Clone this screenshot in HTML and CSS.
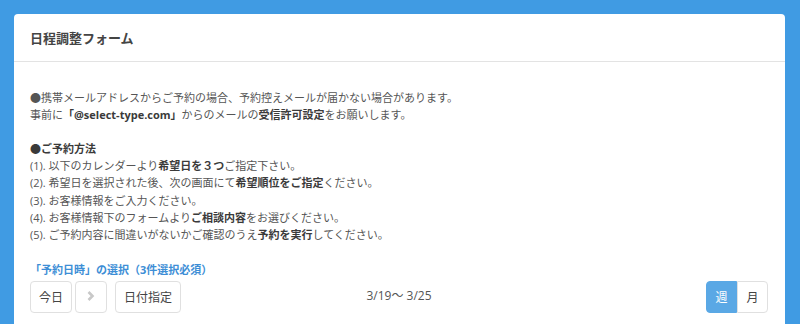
FILE: index.html
```html
<!DOCTYPE html>
<html lang="ja">
<head>
    <meta charset="UTF-8">
    <title>日程調整フォーム</title>
    <link rel="stylesheet" href="styles.css">
</head>
<body>

<div class="panel">
    <div class="panel-head">日程調整フォーム</div>
    <div class="panel-body">
        <p class="notes">
            ●携帯メールアドレスからご予約の場合、予約控えメールが届かない場合があります。<br>
            事前に<b>「@select-type.com」</b>からのメールの<b>受信許可設定</b>をお願いします。<br>
            <br>
            <b>●ご予約方法</b><br>
            (1). 以下のカレンダーより<b>希望日を３つ</b>ご指定下さい。<br>
            (2). 希望日を選択された後、次の画面にて<b>希望順位をご指定</b>ください。<br>
            (3). お客様情報をご入力ください。<br>
            (4). お客様情報下のフォームより<b>ご相談内容</b>をお選びください。<br>
            (5). ご予約内容に間違いがないかご確認のうえ<b>予約を実行</b>してください。
        </p>

        <div class="select-title">「予約日時」の選択（3件選択必須）</div>

        <!-- calendar toolbar -->
        <div class="toolbar">
            <div class="tb-left">
                <button class="btn">今日</button>
                <button class="btn btn-arrow" disabled>
                    <svg width="8" height="10" viewBox="0 0 8 10"><path d="M1.5 1 L5.5 5 L1.5 9" fill="none" stroke="#c8c8c8" stroke-width="2.6"/></svg>
                </button>
                <button class="btn">日付指定</button>
            </div>
            <div class="tb-range">3/19～ 3/25</div>
            <div class="tb-right">
                <button class="btn btn-seg active">週</button><button class="btn btn-seg">月</button>
            </div>
        </div>
    </div>
</div>

</body>
</html>
```

FILE: styles.css
```css
body {
    margin: 0;
    background-color: #409be3;
    font-family: "Open Sans", "Noto Sans CJK JP", sans-serif;
    color: #555;
    height: 324px;
    overflow: hidden;
}

.panel {
    margin: 14px 15px 0 14px;
    background-color: #fff;
    border-radius: 4px 4px 0 0;
    height: 310px;
}

.panel-head {
    height: 47px;
    padding-left: 16px;
    display: flex;
    align-items: center;
    font-size: 13px;
    font-weight: bold;
    color: #444;
    border-bottom: 1px solid #e3e3e3;
}

.panel-body {
    padding: 27px 17px 0 16px;
}

.notes {
    margin: 0;
    font-size: 11px;
    line-height: 17.1px;
}

.notes b {
    color: #3a3a3a;
}

.select-title {
    margin-top: 18px;
    font-size: 11px;
    line-height: 17px;
    font-weight: bold;
    color: #3d8ed6;
}

.toolbar {
    margin-top: 3px;
    display: flex;
    align-items: center;
}

.tb-left, .tb-right {
    flex: 1;
    display: flex;
}

.tb-right {
    justify-content: flex-end;
}

.tb-range {
    font-size: 12px;
    color: #555;
    padding-bottom: 4px;
}

.btn {
    height: 32px;
    padding: 0 8px;
    margin-right: 3px;
    border: 1px solid #e0e0e0;
    border-radius: 4px;
    background-color: #fff;
    font-family: inherit;
    font-size: 12px;
    color: #444;
}

.btn-arrow {
    width: 32px;
    padding: 0;
    margin-right: 8px;
}

.btn-seg {
    width: 31px;
    padding: 0;
    margin: 0;
}

.btn-seg.active {
    background-color: #5aa8e5;
    border-color: #5aa8e5;
    color: #fff;
    border-radius: 4px 0 0 4px;
}

.btn-seg + .btn-seg {
    border-radius: 0 4px 4px 0;
}
```
